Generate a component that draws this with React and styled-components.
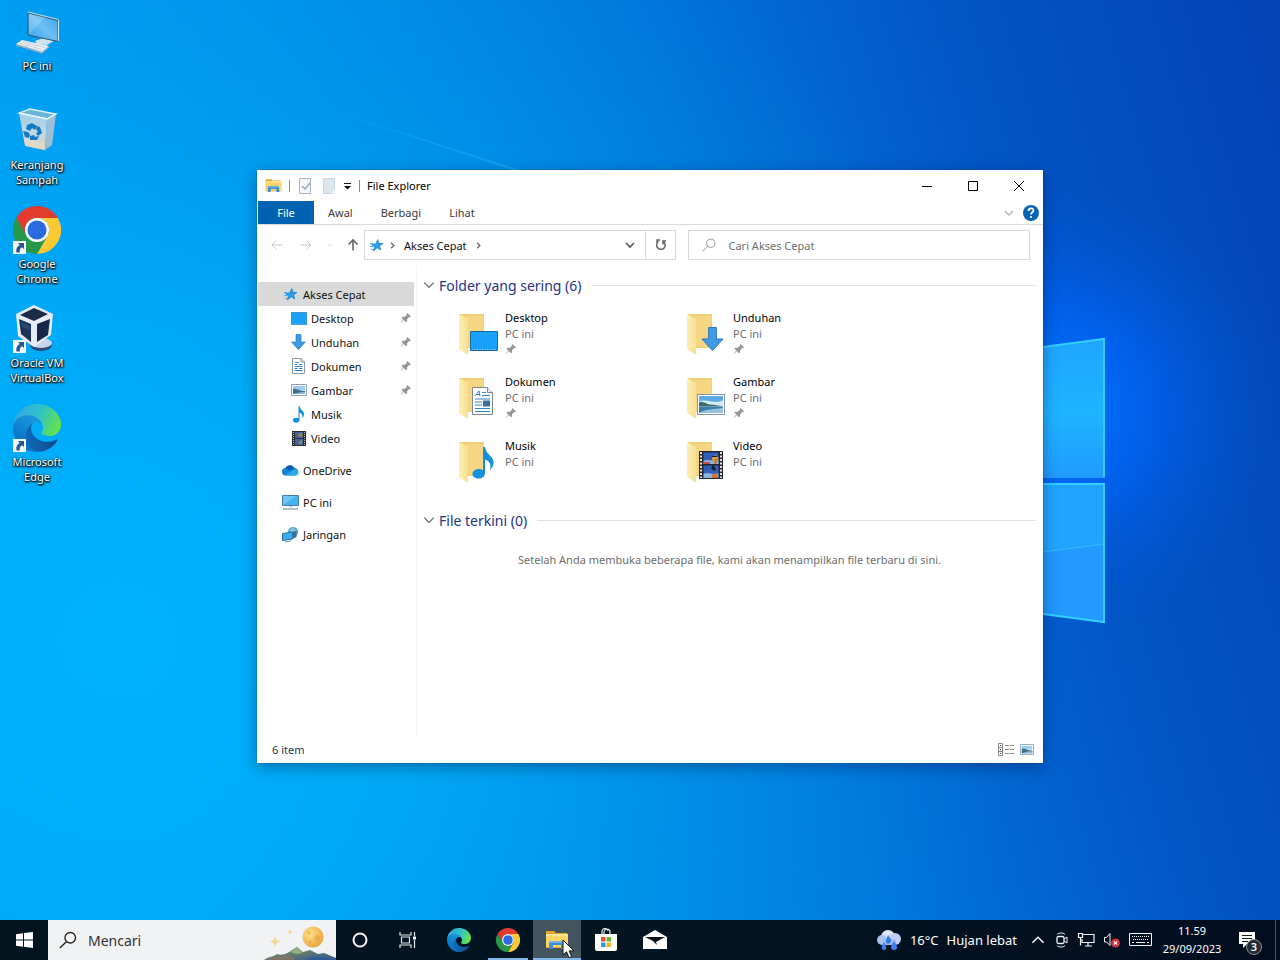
import React from "react";
import styled, { createGlobalStyle, css } from "styled-components";

const GlobalStyle = createGlobalStyle`
  *, *::before, *::after { box-sizing: border-box; }
  body { margin: 0; font-family: "Noto Sans", "Open Sans", sans-serif; font-size: 11px; }
  button, input { font: inherit; color: inherit; border: 0; padding: 0; margin: 0; background: none; }
  svg { display: block; flex: none; }
  ul { list-style: none; margin: 0; padding: 0; }
`;

/* ---------- desktop ---------- */

const Screen = styled.div`
  display: flex;
  flex-direction: column;
  height: 100vh;
  min-height: 640px;
  overflow: hidden;
  background: #0078d7;
`;

const Desktop = styled.main`
  position: relative;
  flex: 1;
  min-height: 0;
`;

const Wallpaper = styled.svg`
  position: absolute;
  inset: 0;
  width: 100%;
  height: 100%;
`;

const Shortcuts = styled.ul`
  position: relative;
  display: flex;
  flex-direction: column;
  width: 74px;
`;

const Shortcut = styled.button`
  display: flex;
  flex-direction: column;
  align-items: center;
  gap: 2px;
  width: 100%;
  height: 99px;
  padding-top: 8px;
  justify-content: flex-start;
  color: #fff;
  line-height: 15px;
  text-shadow: 1px 1px 2px #000, 0 1px 2px #000, 0 0 2px rgba(0, 0, 0, 0.7);
`;

const ShortcutIcon = styled.span`
  position: relative;
  display: block;
  width: 48px;
  height: 48px;
`;

const LinkBadge = styled.svg`
  position: absolute;
  left: 0;
  bottom: 0;
`;

/* ---------- explorer window ---------- */

const Window = styled.section`
  position: absolute;
  inset: 170px 237px 157px 257px;
  display: flex;
  flex-direction: column;
  background: #fff;
  color: #111;
  box-shadow: 0 0 1px rgba(0, 50, 110, 0.8), 0 4px 14px rgba(0, 20, 60, 0.4);
`;

const TitleBar = styled.header`
  display: flex;
  align-items: center;
  height: 31px;
  flex: none;
  padding: 0 1px 0 8px;
`;

const QuickTools = styled.div`
  display: flex;
  align-items: center;
  gap: 7px;
  margin-right: 7px;
`;

const ToolDivider = styled.span`
  width: 1px;
  height: 12px;
  background: #8a8a8a;
`;

const WindowTitle = styled.h1`
  flex: 1;
  margin: 0;
  font-size: 11px;
  font-weight: 400;
  color: #000;
`;

const CaptionButton = styled.button`
  display: grid;
  place-items: center;
  width: 46px;
  height: 30px;
`;

const Ribbon = styled.nav`
  display: flex;
  align-items: center;
  height: 24px;
  flex: none;
  padding: 0 4px 0 1px;
  border-bottom: 1px solid #dadbdc;
`;

const RibbonTab = styled.button`
  height: 23px;
  padding: 0 14px;
  color: #3a3a3a;
  ${(p) =>
    p.$active &&
    css`
      width: 56px;
      padding: 0;
      background: #0063b1;
      color: #fff;
    `}
`;

const RibbonEnd = styled.div`
  display: flex;
  align-items: center;
  gap: 9px;
  margin-left: auto;
`;

const IconButton = styled.button`
  display: grid;
  place-items: center;
  width: ${(p) => p.$w || 16}px;
  height: 16px;
`;

const AddressRow = styled.div`
  display: flex;
  align-items: center;
  height: 40px;
  flex: none;
  padding: 0 13px 0 12px;
`;

const HistoryButtons = styled.div`
  display: flex;
  align-items: center;
  width: 95px;
  gap: 13px;
`;

const AddressBox = styled.div`
  display: flex;
  align-items: center;
  flex: 306 1 0;
  height: 30px;
  min-width: 0;
  border: 1px solid #d9d9d9;
  padding-left: 4px;
`;

const Crumb = styled.button`
  padding: 0 8px 0 4px;
  white-space: nowrap;
`;

const AddressEnd = styled.div`
  display: flex;
  align-items: center;
  align-self: stretch;
  margin-left: auto;
`;

const RefreshButton = styled.button`
  display: grid;
  place-items: center;
  width: 30px;
  height: 100%;
  border-left: 1px solid #d9d9d9;
`;

const SearchBox = styled.label`
  display: flex;
  align-items: center;
  gap: 12px;
  flex: 326 1 0;
  min-width: 0;
  height: 30px;
  margin-left: 12px;
  padding-left: 13px;
  border: 1px solid #d9d9d9;
`;

const SearchInput = styled.input`
  flex: 1;
  min-width: 0;
  outline: none;
  &::placeholder {
    color: #6d6d6d;
    opacity: 1;
  }
`;

const Body = styled.div`
  display: flex;
  flex: 1;
  min-height: 0;
`;

const Sidebar = styled.nav`
  width: 160px;
  flex: none;
  padding: 17px 2px 0 1px;
  border-right: 1px solid #f3f3f3;
`;

const SideItem = styled.button`
  display: flex;
  align-items: center;
  width: 100%;
  height: 24px;
  gap: 4px;
  margin-bottom: ${(p) => (p.$spaced ? 8 : 0)}px;
  padding: 0 2px 0 ${(p) => (p.$nested ? 32 : 24)}px;
  background: ${(p) => (p.$selected ? "#d9d9d9" : "transparent")};
  text-align: left;
  & > span {
    flex: 1;
  }
`;

const SideIcon = styled.i`
  display: grid;
  place-items: center;
  width: 17px;
  flex: none;
`;

const Content = styled.div`
  flex: 1;
  min-width: 0;
  padding: 9px 7px 0 6px;
`;

const GroupHeading = styled.h2`
  display: flex;
  align-items: center;
  gap: 4px;
  height: 22px;
  margin: 0;
  font-size: 14px;
  font-weight: 400;
  color: #1e3287;
  white-space: nowrap;
  &::after {
    content: "";
    flex: 1;
    height: 1px;
    margin-left: 6px;
    background: #e2e2e2;
  }
`;

const FolderGrid = styled.ul`
  display: grid;
  grid-template-columns: repeat(auto-fill, 228px);
  grid-auto-rows: 64px;
  width: 492px;
  max-width: 100%;
  padding: 11px 0 2px 35px;
  margin-bottom: 8px;
`;

const Folder = styled.li`
  display: flex;
  align-items: flex-start;
  gap: 5px;
  padding-top: 3px;
  line-height: 16px;
  color: #000;
`;

const FolderText = styled.span`
  display: flex;
  flex-direction: column;
  small {
    font-size: inherit;
    color: #6d6d6d;
  }
  svg {
    margin-top: 1px;
  }
`;

const EmptyNote = styled.p`
  margin: 21px 0 0;
  text-align: center;
  line-height: 16px;
  color: #6d6d6d;
`;

const StatusBar = styled.footer`
  display: flex;
  align-items: center;
  height: 26px;
  flex: none;
  padding: 0 8px 1px 15px;
  gap: 4px;
  color: #24364f;
  & > span {
    flex: 1;
  }
`;

/* ---------- taskbar ---------- */

const Taskbar = styled.footer`
  display: flex;
  align-items: stretch;
  height: 40px;
  flex: none;
  background: linear-gradient(90deg, #02141d, #031522 50%, #020e20);
  color: #fff;
`;

const TaskButton = styled.button`
  display: grid;
  place-items: center;
  width: 48px;
  margin-right: ${(p) => (p.$app ? 1 : 0)}px;
  background: ${(p) => (p.$active ? "#43565f" : "transparent")};
  background-image: ${(p) => (p.$running ? "linear-gradient(#7fb8ea, #7fb8ea)" : "none")};
  background-repeat: no-repeat;
  background-position: center bottom;
  background-size: ${(p) => (p.$active ? "100%" : "40px")} 2px;
`;

const TaskGroup = styled.div`
  display: flex;
  margin-left: 3px;
`;

const TaskSearch = styled.label`
  display: flex;
  align-items: center;
  width: 288px;
  padding-left: 11px;
  gap: 11px;
  background: #f1f2f3;
  color: #333;
`;

const TaskInput = styled.input`
  flex: 1;
  min-width: 0;
  outline: none;
  font-size: 14px;
  &::placeholder {
    color: #333;
    opacity: 1;
  }
`;

const Tray = styled.div`
  display: flex;
  align-items: stretch;
  margin-left: auto;
`;

const Weather = styled.button`
  display: flex;
  align-items: center;
  gap: 8px;
  margin-right: 12px;
  font-size: 13px;
  white-space: nowrap;
`;

const TrayIcons = styled.div`
  display: flex;
  align-items: center;
  gap: 8px;
`;

const Clock = styled.button`
  display: flex;
  flex-direction: column;
  justify-content: center;
  align-items: center;
  width: 78px;
  line-height: 18px;
`;

const Notify = styled.button`
  position: relative;
  display: grid;
  place-items: center;
  width: 44px;
  padding-right: 12px;
`;

const Badge = styled.span`
  position: absolute;
  left: 15px;
  top: 19px;
  width: 16px;
  height: 16px;
  border: 1px solid #8c939b;
  border-radius: 50%;
  background: #242b35;
  line-height: 14px;
  font-weight: 600;
  text-align: center;
`;

const ShowDesktop = styled.button`
  width: 5px;
  border-left: 1px solid #4a5562;
`;

const Cursor = styled.svg`
  position: fixed;
  left: 562px;
  top: 939px;
  pointer-events: none;
`;

/* ---------- icons ---------- */

const Chrome = ({ size }) => (
  <svg width={size} height={size} viewBox="0 0 48 48">
    <path fill="#e33b2e" d="M3.2 12A24 24 0 0 1 44.8 12H24A12 12 0 0 0 13.6 30Z" />
    <path fill="#fcc934" d="M44.8 12A24 24 0 0 1 24 48L34.4 30A12 12 0 0 0 24 12Z" />
    <path fill="#279847" d="M24 48A24 24 0 0 1 3.2 12L13.6 30A12 12 0 0 0 34.4 30Z" />
    <circle cx="24" cy="24" r="12" fill="#fff" />
    <circle cx="24" cy="24" r="9.6" fill="#2a6be0" />
  </svg>
);

const Edge = ({ size }) => (
  <svg width={size} height={size} viewBox="0 0 256 256">
    <defs>
      <linearGradient id="edgeDeep" x1="0" y1="0" x2="1" y2="0">
        <stop offset="0" stopColor="#0d6cbd" />
        <stop offset="1" stopColor="#114a8b" />
      </linearGradient>
      <linearGradient id="edgeMid" x1=".7" y1="0" x2=".3" y2="1">
        <stop offset="0" stopColor="#1b9de2" />
        <stop offset="1" stopColor="#0669c0" />
      </linearGradient>
      <linearGradient id="edgeTop" x1="0" y1=".3" x2="1" y2=".6">
        <stop offset="0" stopColor="#35a5e8" />
        <stop offset=".5" stopColor="#2fc2c8" />
        <stop offset="1" stopColor="#67e348" />
      </linearGradient>
    </defs>
    <path fill="url(#edgeDeep)" d="M231 190.5c-3.4 1.8-6.9 3.4-10.5 4.7a101.8 101.8 0 0 1-35.9 6.5c-47.3 0-88.5-32.5-88.5-74.3.1-11.4 6.4-21.9 16.4-27.3-42.8 1.8-53.8 46.4-53.8 72.5 0 73.9 68.1 81.4 82.8 81.4 7.9 0 19.8-2.3 27-4.6l1.3-.4a128.3 128.3 0 0 0 66.6-52.8 4 4 0 0 0-5.4-5.7z" />
    <path fill="url(#edgeMid)" d="M105.7 241.4a79.2 79.2 0 0 1-22.7-21.3 80.7 80.7 0 0 1 29.5-120c3.2-1.5 8.5-4.1 15.6-4 10.1.1 19.6 4.9 25.7 13a31.9 31.9 0 0 1 6.3 18.6c0-.2 24.5-79.6-80-79.6-43.9 0-80 41.7-80 78.2-.2 19.3 4 38.5 12.1 56a128 128 0 0 0 156.4 67.1 75.5 75.5 0 0 1-62.8-8z" />
    <path fill="url(#edgeTop)" d="M152.3 148.9c-.9 1-3.4 2.5-3.4 5.6 0 2.6 1.7 5.2 4.8 7.3 14.3 10 41.4 8.6 41.5 8.6 10.7 0 21.1-2.9 30.3-8.3a61.4 61.4 0 0 0 30.4-52.9c.3-22.4-8-37.3-11.3-43.9C223.5 23.9 177.7 0 128 0A128 128 0 0 0 0 126.2c.5-36.5 36.8-66 80-66 3.5 0 23.5.3 42 10.1 16.3 8.6 24.9 18.9 30.8 29.2 6.2 10.7 7.3 24.1 7.3 29.5 0 5.3-2.7 13.3-7.8 19.9z" />
  </svg>
);

const Computer = () => (
  <svg width="48" height="48" viewBox="0 0 48 48">
    <defs>
      <linearGradient id="pcScreen" x1="0" y1="1" x2="1" y2="0">
        <stop offset="0" stopColor="#2f9fe8" />
        <stop offset=".5" stopColor="#6cc0f5" />
        <stop offset="1" stopColor="#3b9fe6" />
      </linearGradient>
    </defs>
    <path d="M22 33l8-3 11 3-7 4-10-1z" fill="#cfe3ef" />
    <path d="M15 5l30 7.500v21L15 27z" fill="url(#pcScreen)" stroke="#34546b" />
    <path d="M15 4l30.500 7.500" stroke="#b9d9ea" strokeWidth="1.2" />
    <path d="M45.500 12v21" stroke="#d4e6f0" />
    <path d="M16 26l17-17-17-3z" fill="#fff" opacity=".18" />
    <path d="M3 36l6-4 27 6-7 6z" fill="#eef2f4" />
    <path d="M3 36l26 8 7-6v1.500l-7 6-26-8z" fill="#9fb4c1" />
    <path d="M7 35.500l22 6M10 34l22 5.500M12 39l6-5M20 41l6-5" stroke="#b9c6ce" strokeWidth=".8" />
  </svg>
);

const Bin = () => (
  <svg width="48" height="48" viewBox="0 0 48 48">
    <defs>
      <linearGradient id="binFront" x1="0" y1="0" x2="0" y2="1">
        <stop offset="0" stopColor="#a0cdea" />
        <stop offset=".6" stopColor="#c3d8e4" />
        <stop offset="1" stopColor="#d9cfbf" />
      </linearGradient>
    </defs>
    <path d="M6 6L17 2l26 5-9 5z" fill="#6bb2dc" stroke="#e3f4fc" strokeWidth="1.3" />
    <path d="M6 6l28 6-2 31-20-4z" fill="url(#binFront)" />
    <path d="M34 12l9-5-4 31-7 5z" fill="#9fbfd4" />
    <path d="M6 6l28 6 9-5" fill="none" stroke="#e9f7fd" strokeWidth="1.3" />
    <path d="M11 32l9 1 12 3v7l-19-4z" fill="#e5dccb" opacity=".8" />
    <g fill="#1679c4">
      <path d="M14 18l5-2 5 3-2 4-3-2-2 3-4-2z" />
      <path d="M24 19l3 1 2 6-4 3-2-3 2-1-2-3z" />
      <path d="M10 24l5 1 2 3-1 3-4-1zM17 29l4-1 1 2 4-1-2 4h-7z" />
    </g>
  </svg>
);

const VBox = () => (
  <svg width="48" height="48" viewBox="0 0 48 48">
    <ellipse cx="28" cy="40" rx="11" ry="6" fill="#31487c" />
    <ellipse cx="28" cy="38" rx="11" ry="5" fill="#c6d5ec" />
    <path d="M21 0l19 9-2 21-17 12L5 31 3 9z" fill="#e6ecf6" />
    <path d="M21 3l14 6-14 7L7 10z" fill="#1d2c46" />
    <path d="M6 14l12 5v18L8 29z" fill="#1b3155" />
    <path d="M24 19l13-5-2 16-11 7z" fill="#17294b" />
    <path d="M8 17l9 4v5L9 22z" fill="#3a5c8c" opacity=".5" />
  </svg>
);

const ShortcutArrow = () => (
  <LinkBadge width="13" height="13" viewBox="0 0 13 13">
    <path d="M0 0h13v13H0z" fill="#f5f8fb" />
    <path d="M5 2h6v6L9 6.300C7 7.500 6.500 9 6.800 11.500H3.500C2.600 8 4 5.500 6.800 4z" fill="#27558f" />
  </LinkBadge>
);

const ExplorerIcon = ({ size }) => (
  <svg width={size} height={size} viewBox="0 0 24 24">
    <path d="M1 3h8l2 2h11v15H1z" fill="#e8a92b" />
    <path d="M1 6h22v13H1z" fill="#fbd667" />
    <path d="M1 6h22v2H1z" fill="#fde492" />
    <path d="M5 13h14l1 2v6h-4v-4H8v4H4v-6z" fill="#3b8fd6" />
    <path d="M5 13h14v2H5z" fill="#69b2ec" />
  </svg>
);

const Star = () => (
  <svg width="15" height="15" viewBox="0 0 15 15">
    <path d="M8.800 1.500l.9 3.800 4.300.2-3.400 2.400 1.100 4.100-3.400-2.200-4 3.200L5.500 9 2.500 6.500l4.300-.7z" fill="#2b9fe6" stroke="#0f7cc4" strokeWidth=".7" />
    <path d="M1 5.500h3M1 8.500h3M2 11.500h2" stroke="#4cb0ec" />
  </svg>
);

const Chevron = ({ dir = "down", size = 10, color = "#666", w = 1 }) => {
  const turn = { down: 0, right: -90, up: 180 }[dir];
  return (
    <svg width={size} height={size} viewBox="0 0 10 10" fill="none" stroke={color} strokeWidth={w}>
      <path d="M1 3l4 4 4-4" transform={`rotate(${turn} 5 5)`} />
    </svg>
  );
};

const Pin = () => (
  <svg width="12" height="12" viewBox="0 0 12 12">
    <path d="M7.500 1l3.500 3.500-1 .8-.8-.3-2.200 2.200v2.300l-1 .8L3.800 8 1 11.200 1 10.500 3.300 7.500 1.500 5.800l.8-1h2.500L7 2.700 6.700 1.800z" fill="#939699" />
  </svg>
);

const SearchGlass = ({ size, color, w = 1 }) => (
  <svg width={size} height={size} viewBox="0 0 16 16" fill="none" stroke={color} strokeWidth={w}>
    <circle cx="10" cy="6" r="4.7" />
    <path d="M6.500 9.500L.8 15.200" />
  </svg>
);

const PictureIcon = ({ w, h }) => (
  <svg width={w} height={h} viewBox="0 0 28 20" preserveAspectRatio="none">
    <path d="M.5.5h27v19H.5z" fill="#fff" stroke="#7f97a8" />
    <path d="M2 2h24v9H2z" fill="#5ba8e8" />
    <path d="M2 7c8-3 15 3 24-1v5H2z" fill="#d3ecf7" />
    <path d="M2 8c4-2 7 2 11 2 5 0 8 1 13 2H2z" fill="#3c6a62" />
    <path d="M2 12h24v6H2z" fill="#397dae" />
    <path d="M2 18c6-4 14-3 24-5v5z" fill="#95c4db" />
  </svg>
);

const PictureSmall = ({ w, h }) => (
  <svg width={w} height={h} viewBox="0 0 16 12" preserveAspectRatio="none">
    <path d="M.5.5h15v11H.5z" fill="#fff" stroke="#8ba0b2" />
    <path d="M2 2h12v4H2z" fill="#9fcdf0" />
    <path d="M2 5c3-1 6 2 12 2v3H2z" fill="#3f6f8c" />
    <path d="M6 9c3-1 5-1 8-1v2H2z" fill="#8bb9d5" />
  </svg>
);

const DocIcon = ({ w, h }) => (
  <svg width={w} height={h} viewBox="0 0 21 28" preserveAspectRatio="none">
    <path d="M.5.5h15l5 5v22H.5z" fill="#fff" stroke="#7b8791" />
    <path d="M15.500.5v5h5" fill="#e5ebef" stroke="#7b8791" />
    <path d="M3 9l4-5 1 5M4 7.500h4M10 5.500h4M10 8.500h8M3 12h15M3 15h7M3 18h7M3 21.500h15M3 24.500h15" stroke="#2d86c8" fill="none" />
    <path d="M11 13.500h7v6h-7z" fill="#366f9d" />
  </svg>
);

const DocSmall = () => (
  <svg width="13" height="16" viewBox="0 0 13 16">
    <path d="M.5.5h8.500l3.500 3.500v11.500H.5z" fill="#fff" stroke="#8d979f" />
    <path d="M9 .5V4h3.500" fill="none" stroke="#8d979f" />
    <path d="M3 4.500h4M2.500 6.500h3M7 6.500h3.500M2.500 8.500h8M2.500 10.500h3M7 10.500h3.500M2.500 12.500h8" stroke="#2d86c8" />
  </svg>
);

const FilmIcon = ({ w, h }) => (
  <svg width={w} height={h} viewBox="0 0 24 28" preserveAspectRatio="none">
    <path d="M0 0h24v28H0z" fill="#24262b" />
    <path d="M2 1v26M22 1v26" stroke="#e4e4e4" strokeWidth="2" strokeDasharray="2 1.5" />
    <path d="M4.500 1.500h15V13h-15zM4.500 14.500h15V27h-15z" fill="#315eb8" />
    <path d="M4.500 10c5-3 10 2 15-2v5h-15zM4.500 23c5-3 8 2 15-1v5h-15z" fill="#88b4de" />
    <path d="M13 6l4-2 2.500 3-2 4-4-1z" fill="#e0a32e" />
    <path d="M16 8h3l-2 5h-2zM13 24l3-2 3 2v3h-6z" fill="#c9762a" />
    <path d="M14 14l3 4-2 2-3-3zM13 5h5v1h-5z" fill="#171b22" />
    <path d="M5 11h6v2H5z" fill="#c24c46" />
  </svg>
);

const FilmSmall = () => (
  <svg width="14" height="15" viewBox="0 0 14 15">
    <path d="M0 0h14v15H0z" fill="#2a2b30" />
    <path d="M1.500 1v13M12.500 1v13" stroke="#b9b9bd" strokeDasharray="1 1" />
    <path d="M3 1h8v6H3zM3 8h8v6H3z" fill="#44639c" />
    <path d="M6 3l4-1 1 3-4 1zM7 10l3-1v4H7z" fill="#8c8a4a" />
  </svg>
);

const NoteIcon = ({ w, h }) => (
  <svg width={w} height={h} viewBox="0 0 22 32">
    <path d="M11 0h2c1 8 9 9 8.500 16-.2 3-1.500 5-3.500 7 1.500-6-.5-9-5-10.500V26c0 3.500-3 5.500-6.500 5.500S.5 29.500.5 27s2.500-5 6-5c1.800 0 3.300.3 4.500 1z" fill="#1290df" />
  </svg>
);

const ArrowIcon = ({ w, h }) => (
  <svg width={w} height={h} viewBox="0 0 24 24" preserveAspectRatio="none">
    <path d="M8 .5h8V12h7L12 23.500 1 12h7z" fill="#3f9be6" stroke="#2a76bb" />
  </svg>
);

const DesktopIcon = ({ w, h }) => (
  <svg width={w} height={h} viewBox="0 0 28 20" preserveAspectRatio="none">
    <path d="M.5.5h27v19H.5z" fill="#18a0fb" stroke="#1a679c" />
    <path d="M2 18.500h24" stroke="#a7d8f7" strokeDasharray="1 1.5" />
  </svg>
);

const CloudIcon = () => (
  <svg width="17" height="12" viewBox="0 0 17 12">
    <path d="M4 11.500A3.700 3.700 0 0 1 3.500 4 5 5 0 0 1 12.500 4 3.800 3.800 0 0 1 13 11.500z" fill="#1382d6" />
    <path d="M3.500 4A5 5 0 0 1 12.500 4L8 6.500z" fill="#0a5cad" />
    <path d="M3 11.500l8-5.500c4-2 7 2 5 4-.8 1.200-1.800 1.500-3 1.500z" fill="#28a8ea" />
  </svg>
);

const PcSmall = () => (
  <svg width="17" height="16" viewBox="0 0 17 16">
    <path d="M.5 1.500h16v10H.5z" fill="#45b4ee" stroke="#457c9f" />
    <path d="M1 11L14 2H1z" fill="#8dd5f7" opacity=".6" />
    <path d="M1 15h15" stroke="#5e87a0" />
    <path d="M6.500 12h4v1.500h-4z" fill="#c5d8e3" />
  </svg>
);

const NetworkIcon = () => (
  <svg width="17" height="17" viewBox="0 0 17 17">
    <circle cx="11" cy="6" r="5" fill="#4b9cca" />
    <path d="M7 4l4-3 4 4-3 3z" fill="#82c3e8" />
    <path d="M.5 7.500l10-1.500v7l-10 1.500z" fill="#37aef0" stroke="#2c6e99" />
    <path d="M10.500 6l4-1.500v6.500l-4 2z" fill="#3b7499" />
    <path d="M3 16l6-1" stroke="#7a98aa" />
  </svg>
);

const OVERLAYS = {
  desktop: [DesktopIcon, 28, 20, 12, 20],
  download: [ArrowIcon, 23, 24, 15, 16],
  doc: [DocIcon, 21, 28, 14, 12],
  picture: [PictureIcon, 28, 21, 11, 19],
  music: [NoteIcon, 22, 32, 14, 8],
  video: [FilmIcon, 24, 28, 13, 12],
};

const FolderIcon = ({ kind }) => {
  const [Overlay, w, h, x, y] = OVERLAYS[kind];
  return (
    <svg width="42" height="47" viewBox="0 -1 42 47">
      <defs>
        <linearGradient id="folderFlap" x1="0" y1="0" x2="1" y2="0">
          <stop offset="0" stopColor="#fdeeb4" />
          <stop offset="1" stopColor="#f7e094" />
        </linearGradient>
      </defs>
      <path d="M1 3h25v34H9z" fill="#f0d074" />
      <path d="M8 5h17v31H9z" fill="#f4d683" />
      <path d="M1 3l9 5v36l-9-6z" fill="url(#folderFlap)" />
      <g transform={`translate(${x} ${y})`}>
        <Overlay w={w} h={h} />
      </g>
    </svg>
  );
};

const PageIcon = ({ check }) => (
  <svg width="15" height="16" viewBox="0 0 15 16">
    <path d="M1.500.5h11v15h-11z" fill={check ? "#f4f6f9" : "#dde5ee"} stroke={check ? "#a7b4c3" : "#cbd6e2"} />
    {check ? <path d="M4 8l3 3 5-6" fill="none" stroke="#98a8bd" strokeWidth="1.5" /> : <path d="M12.500 11l-3 4.500h3z" fill="#fff" />}
  </svg>
);

const NavArrow = ({ dir, color, w = 1 }) => {
  const turn = { left: 0, right: 180, up: 90 }[dir];
  return (
    <svg width="14" height="14" viewBox="0 0 14 14" fill="none" stroke={color} strokeWidth={w}>
      <path d="M12.500 7H2M6.500 2.500L2 7l4.500 4.500" transform={`rotate(${turn} 7 7)`} />
    </svg>
  );
};

const MoonScene = () => (
  <svg width="72" height="40" viewBox="0 0 72 40">
    <defs>
      <linearGradient id="hills" x1="0" y1="0" x2="1" y2="1">
        <stop offset="0" stopColor="#2786a0" />
        <stop offset=".45" stopColor="#657e6c" />
        <stop offset="1" stopColor="#31548d" />
      </linearGradient>
      <radialGradient id="moon" cx=".35" cy=".35" r=".7">
        <stop offset="0" stopColor="#ffe18a" />
        <stop offset="1" stopColor="#e9a53f" />
      </radialGradient>
    </defs>
    <circle cx="49" cy="17" r="10.5" fill="url(#moon)" />
    <g fill="#dda03c" opacity=".45">
      <circle cx="45" cy="13" r="2" />
      <circle cx="53" cy="18" r="3" />
      <circle cx="46" cy="22" r="1.5" />
    </g>
    <path d="M11 16l1.500 4 4 1.500-4 1.500L11 27l-1.500-4-4-1.500 4-1.500zM26 9l1 2 2 1-2 1-1 2-1-2-2-1 2-1z" fill="#f3d99b" />
    <path d="M0 40c5-4 9-3 13-6 6 2 11-1 15-4l5-3 6 5 7-2 8 4 6-1 12 5v2z" fill="url(#hills)" />
    <path d="M26 32l7-5 6 6-6 1z" fill="#94b07e" />
    <path d="M5 39c7-3 12-1 18-4 4 2 7 2 8 5H5z" fill="#ba7152" opacity=".4" />
    <path d="M42 40c8-6 14-3 30-1v1z" fill="#2f5b96" />
  </svg>
);

const WeatherIcon = () => (
  <svg width="26" height="24" viewBox="0 0 26 24">
    <circle cx="12" cy="9" r="7" fill="#dce7fb" />
    <circle cx="6" cy="12" r="5" fill="#a9c2f2" />
    <circle cx="19" cy="11" r="6" fill="#bfcff5" />
    <path d="M6 11h14v6H6z" fill="#a5bcf0" />
    <path d="M12 7c3 4 4 6 2 8s-5 0-4-3z" fill="#2d7ae0" />
    <path d="M8 14c3 4 3 8 0 8s-3-4 0-8zM18 13c4 5 4 9 0 9s-4-4 0-9z" fill="#3a80ee" />
  </svg>
);

const StoreIcon = () => (
  <svg width="24" height="24" viewBox="0 0 24 24">
    <path d="M8 7V4a3 3 0 0 1 6-1M10 7V4a3 3 0 0 1 6 0v3" fill="none" stroke="#e9e9e9" strokeWidth="1.2" />
    <path d="M1 6h22v15a2 2 0 0 1-2 2H3a2 2 0 0 1-2-2z" fill="#fff" />
    <path d="M7 9h4.500v4.500H7z" fill="#e8502d" />
    <path d="M12.500 9H17v4.500h-4.500z" fill="#6fb52c" />
    <path d="M7 14.500h4.500V19H7z" fill="#2a9be0" />
    <path d="M12.500 14.500H17V19h-4.500z" fill="#f3b51c" />
  </svg>
);

const MailIcon = () => (
  <svg width="26" height="22" viewBox="0 0 26 22">
    <path d="M1 8L13 1l12 7v12H1z" fill="#fff" />
    <path d="M3 8h20l-9 5 1 3-4-4z" fill="#07121c" />
  </svg>
);

const TaskViewIcon = () => (
  <svg width="18" height="18" viewBox="0 0 18 18" fill="none" stroke="#e6ebee" strokeWidth="1.2">
    <path d="M1 1v3h11V1M2.500 6v6h8V6zM1 17v-3h11v3M15.500 1v4M15.500 9v8" />
    <path d="M14 5.500h3v3h-3z" fill="#fff" stroke="none" />
  </svg>
);

const CameraIcon = () => (
  <svg width="14" height="18" viewBox="0 0 14 18" fill="none" stroke="#f2f4f6">
    <rect x="2" y="5.5" width="7" height="7" rx="1.5" strokeWidth="1.3" />
    <path d="M9 8l3-2v6l-3-2M2 3.500C4 1.500 8 1.500 10 3.500M2 14.500c2 2 6 2 8 0" />
  </svg>
);

const LanIcon = () => (
  <svg width="18" height="16" viewBox="0 0 18 16" fill="none" stroke="#f2f4f6" strokeWidth="1.2">
    <path d="M6 2.500h11v8H5V7M1.500 1.500h4v4h-4zM3.500 5.500v8M11 10.500v3M8 14h7" />
  </svg>
);

const MutedIcon = () => (
  <svg width="18" height="18" viewBox="0 0 18 18">
    <path d="M1.500 6.500h2L7 2.500v12L3.500 11h-2z" fill="none" stroke="#f2f4f6" />
    <circle cx="12.5" cy="12" r="4.5" fill="#cf2f3a" />
    <path d="M10.800 10.300l3.400 3.400M14.200 10.300l-3.400 3.400" stroke="#fff" strokeWidth="1.2" />
  </svg>
);

const KeyboardIcon = () => (
  <svg width="24" height="14" viewBox="0 0 24 14" fill="none" stroke="#f2f4f6">
    <path d="M.5.5h22v12H.5z" />
    <path d="M3 3.500h18M4 6.500h16" strokeDasharray="1 1" />
    <path d="M3 9.500h2M7 9.500h9M18 9.500h2" />
  </svg>
);

const NotifyIcon = () => (
  <svg width="18" height="18" viewBox="0 0 18 18">
    <path d="M1 1h16v12H9l-4 4v-4H1z" fill="#fff" />
    <path d="M4 4.500h10M4 7.500h10M4 10.500h6" stroke="#101a26" />
  </svg>
);

/* ---------- data ---------- */

const shortcuts = [
  { label: "PC ini", icon: <Computer /> },
  { label: "Keranjang Sampah", icon: <Bin /> },
  { label: "Google Chrome", icon: <Chrome size={48} />, link: true },
  { label: "Oracle VM VirtualBox", icon: <VBox />, link: true },
  { label: "Microsoft Edge", icon: <Edge size={48} />, link: true },
];

const sideItems = [
  { label: "Akses Cepat", icon: <Star />, selected: true },
  { label: "Desktop", icon: <DesktopIcon w={16} h={13} />, nested: true, pin: true },
  { label: "Unduhan", icon: <ArrowIcon w={15} h={16} />, nested: true, pin: true },
  { label: "Dokumen", icon: <DocSmall />, nested: true, pin: true },
  { label: "Gambar", icon: <PictureSmall w={16} h={12} />, nested: true, pin: true },
  { label: "Musik", icon: <NoteIcon w={13} h={17} />, nested: true },
  { label: "Video", icon: <FilmSmall />, nested: true, spaced: true },
  { label: "OneDrive", icon: <CloudIcon />, spaced: true },
  { label: "PC ini", icon: <PcSmall />, spaced: true },
  { label: "Jaringan", icon: <NetworkIcon /> },
];

const folders = [
  { label: "Desktop", kind: "desktop", pin: true },
  { label: "Unduhan", kind: "download", pin: true },
  { label: "Dokumen", kind: "doc", pin: true },
  { label: "Gambar", kind: "picture", pin: true },
  { label: "Musik", kind: "music" },
  { label: "Video", kind: "video" },
];

const Background = () => (
  <Wallpaper viewBox="0 0 1280 920" preserveAspectRatio="none" aria-hidden="true">
    <defs>
      <linearGradient id="sky" x1="0" y1=".2" x2="1" y2="0">
        <stop offset="0" stopColor="#00a4fa" />
        <stop offset=".25" stopColor="#0093ee" />
        <stop offset=".5" stopColor="#0078de" />
        <stop offset=".75" stopColor="#0355c6" />
        <stop offset="1" stopColor="#0343b6" />
      </linearGradient>
      <radialGradient id="lowGlow" cx="120" cy="640" r="900" gradientUnits="userSpaceOnUse">
        <stop offset="0" stopColor="#00b2ff" />
        <stop offset=".35" stopColor="#00acf6" stopOpacity=".8" />
        <stop offset="1" stopColor="#0088dc" stopOpacity="0" />
      </radialGradient>
      <radialGradient id="logoGlow" cx="1050" cy="410" r="230" gradientUnits="userSpaceOnUse">
        <stop offset="0" stopColor="#0078ff" />
        <stop offset=".4" stopColor="#0066fa" stopOpacity=".75" />
        <stop offset="1" stopColor="#0054d0" stopOpacity="0" />
      </radialGradient>
      <linearGradient id="pane" x1="0" y1="0" x2="0" y2="1">
        <stop offset="0" stopColor="#1ea5ff" />
        <stop offset=".55" stopColor="#1fb4ff" />
        <stop offset="1" stopColor="#1f9bff" />
      </linearGradient>
      <linearGradient id="beam" x1="0" y1="0" x2="1" y2="0">
        <stop offset="0" stopColor="#29b4ff" stopOpacity="0" />
        <stop offset="1" stopColor="#29b4ff" stopOpacity=".5" />
      </linearGradient>
    </defs>
    <path d="M0 0h1280v920H0z" fill="url(#sky)" />
    <path d="M0 0h1280v920H0z" fill="url(#lowGlow)" />
    <path d="M0 0h1280v920H0z" fill="url(#logoGlow)" />
    <path d="M270 90L520 170h-8z" fill="url(#beam)" />
    <path d="M1043 347l62-9v140h-62z" fill="url(#pane)" />
    <path d="M1043 484h62v139l-62-9z" fill="#2299ff" />
    <path d="M1043 484h62v60l-62 8z" fill="#21a4ff" />
    <path d="M1043 552l62-8" stroke="#35baff" />
    <path d="M1043 347l61-8v138M1043 484h61v138l-61-8" fill="none" stroke="#2fd0ff" strokeWidth="2" />
  </Wallpaper>
);

export default function App() {
  return (
    <Screen>
      <GlobalStyle />
      <Desktop>
        <Background />
        <Shortcuts>
          {shortcuts.map((s) => (
            <li key={s.label}>
              <Shortcut>
                <ShortcutIcon>
                  {s.icon}
                  {s.link && <ShortcutArrow />}
                </ShortcutIcon>
                {s.label}
              </Shortcut>
            </li>
          ))}
        </Shortcuts>

        <Window aria-label="File Explorer">
          <TitleBar>
            <QuickTools>
              <ExplorerIcon size={17} />
              <ToolDivider />
              <IconButton $w={17} aria-label="Properti"><PageIcon check /></IconButton>
              <IconButton aria-label="Folder baru"><PageIcon /></IconButton>
              <IconButton $w={8} aria-label="Sesuaikan">
                <svg width="8" height="9" viewBox="0 0 8 9"><path d="M0 2.500h7" stroke="#111" /><path d="M0 5h7L3.500 8.500z" fill="#111" /></svg>
              </IconButton>
              <ToolDivider />
            </QuickTools>
            <WindowTitle>File Explorer</WindowTitle>
            <CaptionButton aria-label="Minimalkan">
              <svg width="10" height="10"><path d="M0 5.500h10" stroke="#000" /></svg>
            </CaptionButton>
            <CaptionButton aria-label="Maksimalkan">
              <svg width="10" height="10"><path d="M.5.5h9v9h-9z" fill="none" stroke="#000" /></svg>
            </CaptionButton>
            <CaptionButton aria-label="Tutup">
              <svg width="10" height="10"><path d="M0 0l10 10M10 0L0 10" stroke="#000" /></svg>
            </CaptionButton>
          </TitleBar>

          <Ribbon>
            <RibbonTab $active>File</RibbonTab>
            <RibbonTab>Awal</RibbonTab>
            <RibbonTab>Berbagi</RibbonTab>
            <RibbonTab>Lihat</RibbonTab>
            <RibbonEnd>
              <IconButton $w={10} aria-label="Perluas pita"><Chevron color="#b5b5b5" w={1.5} /></IconButton>
              <IconButton aria-label="Bantuan">
                <svg width="16" height="16" viewBox="0 0 16 16">
                  <circle cx="8" cy="8" r="8" fill="#0a64b4" />
                  <path d="M5.500 6c0-3.500 5-3.300 5-.6 0 1.800-2.500 1.900-2.500 4" fill="none" stroke="#fff" strokeWidth="1.8" />
                  <circle cx="8" cy="12" r="1.1" fill="#fff" />
                </svg>
              </IconButton>
            </RibbonEnd>
          </Ribbon>

          <AddressRow>
            <HistoryButtons>
              <IconButton aria-label="Kembali"><NavArrow dir="left" color="#c9c9c9" /></IconButton>
              <IconButton aria-label="Maju"><NavArrow dir="right" color="#c9c9c9" /></IconButton>
              <IconButton $w={6} aria-label="Lokasi terkini"><Chevron size={6} color="#c0c0c0" /></IconButton>
              <IconButton $w={10} aria-label="Ke atas"><NavArrow dir="up" color="#666" w={1.6} /></IconButton>
            </HistoryButtons>
            <AddressBox>
              <Star />
              <IconButton $w={16} aria-label="Lokasi"><Chevron dir="right" size={7} w={1.8} /></IconButton>
              <Crumb>Akses Cepat</Crumb>
              <Chevron dir="right" size={7} w={1.8} />
              <AddressEnd>
                <IconButton $w={30} aria-label="Riwayat alamat"><Chevron color="#555" w={1.6} /></IconButton>
                <RefreshButton aria-label="Segarkan">
                  <svg width="12" height="12" viewBox="0 0 12 12" fill="none" stroke="#666" strokeWidth="1.5">
                    <path d="M3.500 2.500A4.300 4.300 0 1 0 8 2.300M5 1H2v3.500M8 5.500V2h3" />
                  </svg>
                </RefreshButton>
              </AddressEnd>
            </AddressBox>
            <SearchBox>
              <SearchGlass size={14} color="#888" />
              <SearchInput type="text" placeholder="Cari Akses Cepat" aria-label="Cari Akses Cepat" />
            </SearchBox>
          </AddressRow>

          <Body>
            <Sidebar>
              {sideItems.map((it, i) => (
                <SideItem key={i} $selected={it.selected} $nested={it.nested} $spaced={it.spaced}>
                  <SideIcon>{it.icon}</SideIcon>
                  <span>{it.label}</span>
                  {it.pin && <Pin />}
                </SideItem>
              ))}
            </Sidebar>
            <Content>
              <GroupHeading><Chevron size={12} />Folder yang sering (6)</GroupHeading>
              <FolderGrid>
                {folders.map((f) => (
                  <Folder key={f.label}>
                    <FolderIcon kind={f.kind} />
                    <FolderText>
                      {f.label}
                      <small>PC ini</small>
                      {f.pin && <Pin />}
                    </FolderText>
                  </Folder>
                ))}
              </FolderGrid>
              <GroupHeading><Chevron size={12} />File terkini (0)</GroupHeading>
              <EmptyNote>Setelah Anda membuka beberapa file, kami akan menampilkan file terbaru di sini.</EmptyNote>
            </Content>
          </Body>

          <StatusBar>
            <span>6 item</span>
            <IconButton $w={18} aria-label="Rincian">
              <svg width="17" height="13" viewBox="0 0 17 13" fill="none" stroke="#888">
                <path d="M.5.5h4v12h-4zM.5 4.500h4M.5 8.500h4M7 2.500h4M12 2.500h4M7 6.500h4M12 6.500h4M7 10.500h4M12 10.500h4" />
                <path d="M2.500 2v9" strokeDasharray="1 3" stroke="#333" />
              </svg>
            </IconButton>
            <IconButton aria-label="Gambar mini"><PictureSmall w={14} h={11} /></IconButton>
          </StatusBar>
        </Window>
      </Desktop>

      <Taskbar>
        <TaskButton aria-label="Mulai">
          <svg width="17" height="16" viewBox="0 0 17 16"><path d="M0 2.200L7 1.200v6.300H0zM8 1.100L17 0v7.500H8zM0 8.500h7v6.300l-7-1zM8 8.500h9V16l-9-1.200z" fill="#fff" /></svg>
        </TaskButton>
        <TaskSearch>
          <SearchGlass size={18} color="#222" w={1.2} />
          <TaskInput type="text" placeholder="Mencari" aria-label="Mencari" />
          <MoonScene />
        </TaskSearch>
        <TaskButton aria-label="Cortana">
          <svg width="16" height="16"><circle cx="8" cy="8" r="6.5" fill="none" stroke="#f1f1f1" strokeWidth="2" /></svg>
        </TaskButton>
        <TaskButton aria-label="Tampilan tugas"><TaskViewIcon /></TaskButton>
        <TaskGroup>
          <TaskButton $app aria-label="Microsoft Edge"><Edge size={24} /></TaskButton>
          <TaskButton $app $running aria-label="Google Chrome"><Chrome size={24} /></TaskButton>
          <TaskButton $app $running $active aria-label="File Explorer"><ExplorerIcon size={24} /></TaskButton>
          <TaskButton $app aria-label="Microsoft Store"><StoreIcon /></TaskButton>
          <TaskButton $app aria-label="Mail"><MailIcon /></TaskButton>
        </TaskGroup>
        <Tray>
          <Weather><WeatherIcon /><span>16°C</span><span>Hujan lebat</span></Weather>
          <TrayIcons>
            <IconButton $w={18} aria-label="Ikon tersembunyi"><Chevron dir="up" size={14} color="#fff" /></IconButton>
            <CameraIcon />
            <LanIcon />
            <MutedIcon />
            <KeyboardIcon />
          </TrayIcons>
          <Clock><span>11.59</span><span>29/09/2023</span></Clock>
          <Notify aria-label="Pemberitahuan"><NotifyIcon /><Badge>3</Badge></Notify>
          <ShowDesktop aria-label="Tampilkan desktop" />
        </Tray>
      </Taskbar>
      <Cursor width="13" height="20" viewBox="0 0 13 20">
        <path d="M1 1v15l3.500-3.200L7 18.800l2.700-1.200-2.500-5.700H12z" fill="#fff" stroke="#111" />
      </Cursor>
    </Screen>
  );
}
